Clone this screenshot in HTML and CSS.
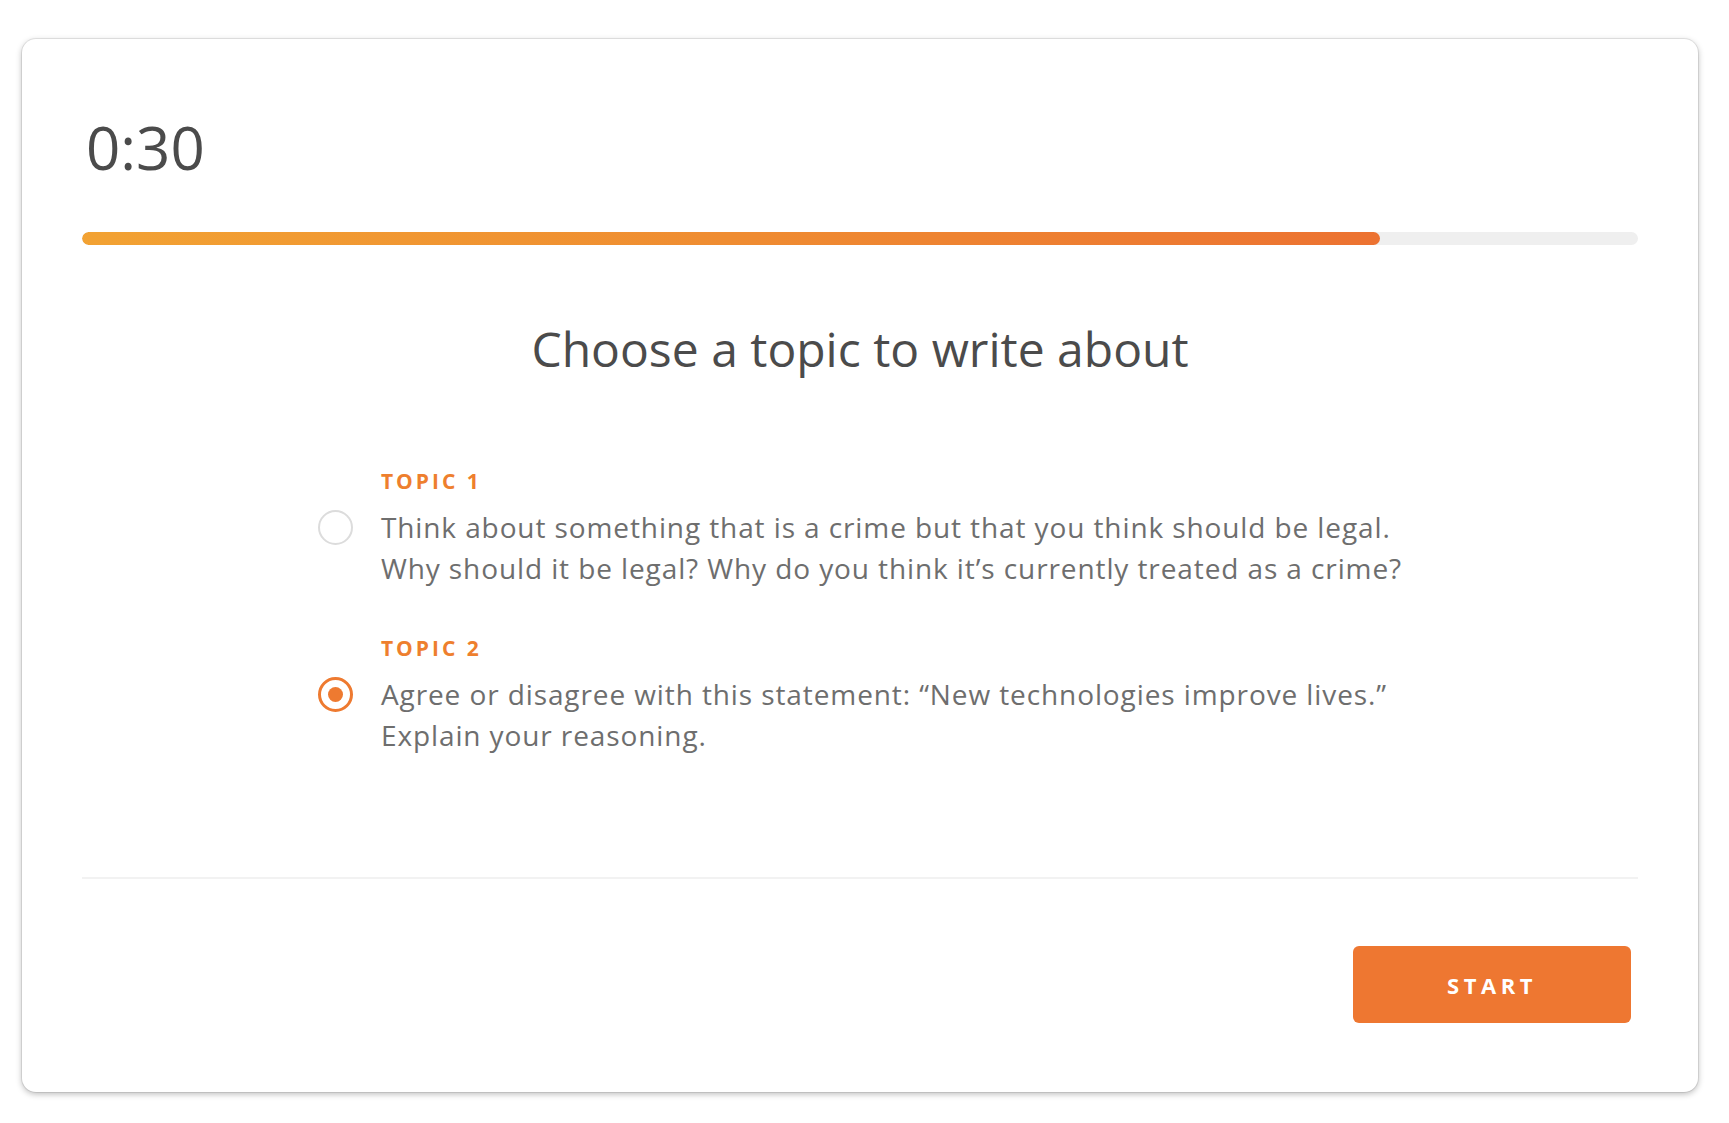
FILE: index.html
```html
<!DOCTYPE html>
<html lang="en">
<head>
<meta charset="utf-8">
<title>Choose a topic</title>
<link rel="stylesheet" href="styles.css">
</head>
<body>
<div class="page">
  <div class="card">
    <div class="timer">0:30</div>
    <div class="progress"><div class="progress-fill" style="width: 83.4%"></div></div>
    <h1 class="title">Choose a topic to write about</h1>
    <div class="options">
      <div class="option">
        <div class="label">TOPIC 1</div>
        <div class="row">
          <span class="radio"></span>
          <p class="text">Think about something that is a crime but that you think should be legal.<br>Why should it be legal? Why do you think it’s currently treated as a crime?</p>
        </div>
      </div>
      <div class="option">
        <div class="label">TOPIC 2</div>
        <div class="row">
          <span class="radio checked"></span>
          <p class="text">Agree or disagree with this statement: “New technologies improve lives.”<br>Explain your reasoning.</p>
        </div>
      </div>
    </div>
    <div class="divider"></div>
    <div class="footer">
      <button class="start">START</button>
    </div>
  </div>
</div>
</body>
</html>
```
FILE: styles.css
```css
html, body {
  margin: 0;
  padding: 0;
  background: #ffffff;
}
body {
  font-family: "Open Sans", "Noto Sans", sans-serif;
  color: #4b4b4b;
}
.page {
  padding: 39px 31px 31px 22px;
}
.card {
  width: 1676px;
  height: 1053px;
  box-sizing: border-box;
  background: #fff;
  border-radius: 14px;
  box-shadow: 0 0 0 1px rgba(0,0,0,0.08), 0 2px 6px rgba(0,0,0,0.28);
  padding: 0 60px;
  display: flex;
  flex-direction: column;
}
.timer {
  font-size: 60px;
  line-height: 1;
  margin-top: 78px;
  margin-left: 4px;
  color: #4b4b4b;
  font-weight: 400;
}
.progress {
  margin-top: 55px;
  height: 13px;
  border-radius: 7px;
  background: #efefef;
  overflow: hidden;
}
.progress-fill {
  height: 100%;
  border-radius: 7px;
  background: linear-gradient(90deg, #f2a233 0%, #ef8c31 50%, #ec7231 100%);
}
.title {
  margin: 74px 0 0;
  text-align: center;
  font-size: 48px;
  font-weight: 400;
  line-height: 60px;
  color: #4b4b4b;
}
.options {
  align-self: center;
  margin-top: 88px;
  display: flex;
  flex-direction: column;
  gap: 45px;
}
.label {
  margin-left: 63px;
  font-size: 21px;
  font-weight: 700;
  color: #ee7f2e;
  letter-spacing: 3px;
  line-height: 28px;
}
.row {
  display: flex;
  align-items: flex-start;
  gap: 28px;
  margin-top: 12px;
}
.radio {
  flex: none;
  width: 31px;
  height: 31px;
  border: 2px solid #dcdcdc;
  border-radius: 50%;
  margin-top: 3px;
  box-sizing: content-box;
  position: relative;
}
.radio.checked {
  border: 3px solid #ee7a30;
  width: 29px;
  height: 29px;
}
.radio.checked::after {
  content: "";
  position: absolute;
  left: 7px;
  top: 7px;
  width: 15px;
  height: 15px;
  border-radius: 50%;
  background: #ee7a30;
}
.text {
  margin: 0;
  font-size: 28px;
  line-height: 41px;
  letter-spacing: 0.9px;
  color: #6e6e6e;
}
.divider {
  margin-top: 121px;
  height: 2px;
  background: #f2f2f2;
}
.footer {
  display: flex;
  justify-content: flex-end;
  margin-top: 67px;
  padding-right: 7px;
}
.start {
  width: 278px;
  height: 77px;
  border: none;
  border-radius: 6px;
  background: #ee7731;
  color: #fff;
  font-family: "Open Sans", "Noto Sans", sans-serif;
  font-size: 22px;
  font-weight: 700;
  letter-spacing: 4.5px;
  padding: 0;
}
```
